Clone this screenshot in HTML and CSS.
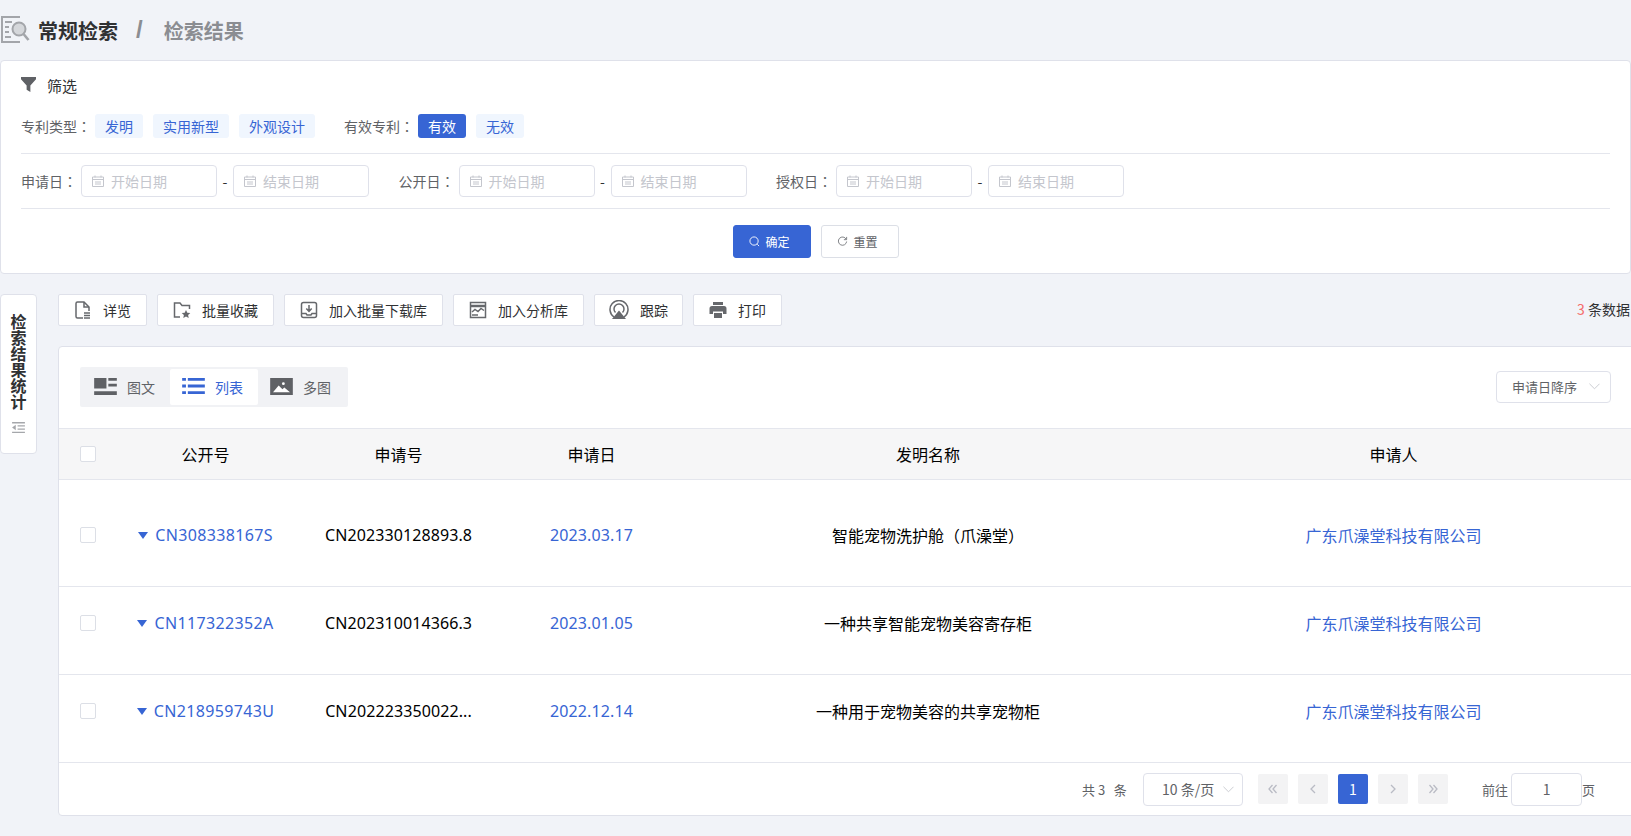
FILE: index.html
```html
<!DOCTYPE html>
<html lang="zh-CN">
<head>
  <meta charset="UTF-8">
  <title>检索结果</title>
  <link rel="stylesheet" href="styles.css">
</head>
<body>
  <!-- 面包屑 -->
  <div class="crumb">
    <svg class="crumb-icon" viewBox="0 0 30 30" fill="none" stroke="#a3a5aa" stroke-width="2">
      <path d="M20 2H2v25h18"/>
      <path d="M5 7h7M5 12h4M5 17h4M5 22h6"/>
      <circle cx="19" cy="14" r="6.5" fill="#d5d7db"/>
      <path d="M23.5 19l5 6" stroke-width="2.6"/>
    </svg>
    <span class="crumb-main">常规检索</span>
    <span class="crumb-sep">/</span>
    <span class="crumb-sub">检索结果</span>
  </div>

  <!-- 筛选 -->
  <div class="filter-panel">
    <div class="filter-title">
      <svg class="filter-icon" viewBox="0 0 16 16"><path d="M0 0h16v2.5L10 9v7l-4-2.500V9L0 2.500z" fill="#5f6165"/></svg>
      <span>筛选</span>
    </div>
    <div class="filter-tags">
      <span class="label">专利类型<i class="colon" lang="zh-TW">：</i></span>
      <span class="tag">发明</span>
      <span class="tag">实用新型</span>
      <span class="tag">外观设计</span>
      <span class="label label-gap">有效专利<i class="colon" lang="zh-TW">：</i></span>
      <span class="tag tag-active">有效</span>
      <span class="tag">无效</span>
    </div>
    <div class="filter-dates">
      <span class="label">申请日<i class="colon" lang="zh-TW">：</i></span>
      <div class="date-input"><svg class="cal" viewBox="0 0 12 12"><path d="M.5 2h11v9.500H.5zM.5 4.500h11M3 .5v2M9 .5v2M3 7h6M3 9h6" fill="none" stroke="#c4c6cd"/></svg>开始日期</div>
      <span class="dash">-</span>
      <div class="date-input"><svg class="cal" viewBox="0 0 12 12"><path d="M.5 2h11v9.500H.5zM.5 4.500h11M3 .5v2M9 .5v2M3 7h6M3 9h6" fill="none" stroke="#c4c6cd"/></svg>结束日期</div>
      <span class="label date-label">公开日<i class="colon" lang="zh-TW">：</i></span>
      <div class="date-input"><svg class="cal" viewBox="0 0 12 12"><path d="M.5 2h11v9.500H.5zM.5 4.500h11M3 .5v2M9 .5v2M3 7h6M3 9h6" fill="none" stroke="#c4c6cd"/></svg>开始日期</div>
      <span class="dash">-</span>
      <div class="date-input"><svg class="cal" viewBox="0 0 12 12"><path d="M.5 2h11v9.500H.5zM.5 4.500h11M3 .5v2M9 .5v2M3 7h6M3 9h6" fill="none" stroke="#c4c6cd"/></svg>结束日期</div>
      <span class="label date-label">授权日<i class="colon" lang="zh-TW">：</i></span>
      <div class="date-input"><svg class="cal" viewBox="0 0 12 12"><path d="M.5 2h11v9.500H.5zM.5 4.500h11M3 .5v2M9 .5v2M3 7h6M3 9h6" fill="none" stroke="#c4c6cd"/></svg>开始日期</div>
      <span class="dash">-</span>
      <div class="date-input"><svg class="cal" viewBox="0 0 12 12"><path d="M.5 2h11v9.500H.5zM.5 4.500h11M3 .5v2M9 .5v2M3 7h6M3 9h6" fill="none" stroke="#c4c6cd"/></svg>结束日期</div>
    </div>
    <div class="filter-actions">
      <button class="btn btn-primary">
        <svg class="btn-icon" viewBox="0 0 12 12" fill="none" stroke="#fff"><circle cx="5.500" cy="5.500" r="4.500"/><path d="M9 9l2 2"/></svg>确定
      </button>
      <button class="btn">
        <svg class="btn-icon" viewBox="0 0 12 12" fill="none" stroke="#77797e"><path d="M10 3.500A4.500 4.500 0 1 0 10.500 6M10.500 1v3h-3"/></svg>重置
      </button>
    </div>
  </div>

  <div class="content">
    <!-- 左侧统计 -->
    <div class="side-tab">
      <span class="side-text">检索结果统计</span>
      <svg class="side-icon" viewBox="0 0 14 12" fill="#a5a7ab"><path d="M0 0h14v1.500H0zM6 3.500h8V5H6zM6 7h8v1.500H6zM0 10.500h14V12H0zM4 3v6L0 6z"/></svg>
    </div>

    <div class="main">
      <div class="toolbar">
        <button class="tool tool-1">
          <svg class="tool-icon" viewBox="0 0 18 18" fill="none" stroke="#66686c" stroke-width="1.500"><path d="M9 17H3.500A1.500 1.500 0 0 1 2 15.500v-13A1.500 1.500 0 0 1 3.500 1H10l5 5v4"/><path d="M10 1v5h5"/><path d="M10 12h6M10 14.500h6M10 17h6"/></svg>详览
        </button>
        <button class="tool tool-2">
          <svg class="tool-icon" viewBox="0 0 18 18" fill="none" stroke="#66686c" stroke-width="1.500"><path d="M7 16H1.500V2H7l2 2.500h7.500V8"/><path d="M13 9l1.300 2.700 3 .4-2.200 2 .6 2.900-2.700-1.500-2.700 1.500.6-2.900-2.200-2 3-.4z" fill="#66686c" stroke="none"/></svg>批量收藏
        </button>
        <button class="tool tool-3">
          <svg class="tool-icon" viewBox="0 0 18 18" fill="none" stroke="#66686c" stroke-width="1.500"><rect x="1.500" y="1.500" width="15" height="15" rx="2"/><path d="M9 4v6M6.300 7.500L9 10.500l2.700-3M1.500 12.500h4.500l1 1.500h4l1-1.500h4.500"/></svg>加入批量下载库
        </button>
        <button class="tool tool-4">
          <svg class="tool-icon" viewBox="0 0 18 18" fill="none" stroke="#66686c" stroke-width="1.500"><path d="M1.500 1.500h15v15h-15z"/><path d="M1.500 5h15" stroke-width="2.500"/><path d="M3 11l3-2.500 3 2 3-3 3 2M3 14h6"/></svg>加入分析库
        </button>
        <button class="tool tool-5">
          <svg class="tool-icon tool-icon-lg" viewBox="0 0 20 20" fill="none" stroke="#66686c" stroke-width="1.500"><path d="M5 17a9 9 0 1 1 10 0"/><path d="M6.500 12.500a5 5 0 1 1 7 0"/><path d="M10 10.500l7 8.500H3z" fill="#66686c" stroke="none"/></svg>跟踪
        </button>
        <button class="tool tool-6">
          <svg class="tool-icon" viewBox="0 0 18 18" fill="#66686c"><path d="M4 1h10v3H4zM3 5h12a2.500 2.500 0 0 1 2.500 2.500V13H14v-2.500H4V13H.5V7.500A2.500 2.500 0 0 1 3 5zM5 12h8v5H5z"/></svg>打印
        </button>
        <div class="count"><em>3</em> 条数据</div>
      </div>

      <div class="result-panel">
        <div class="result-head">
          <div class="view-tabs">
            <div class="view-tab">
              <svg class="view-icon" viewBox="0 0 24 18" fill="#5f6165"><path d="M0 0h13v11H0zM15 0h9v3h-9zM15 6h9v3h-9zM0 14h24v4H0z"/></svg>图文
            </div>
            <div class="view-tab view-tab-active">
              <svg class="view-icon" viewBox="0 0 24 18" fill="#3765d4"><path d="M0 0h4v3H0zM6 0h18v3H6zM0 7h4v3H0zM6 7h18v3H6zM0 14h4v3H0zM6 14h18v3H6z"/></svg>列表
            </div>
            <div class="view-tab">
              <svg class="view-icon" viewBox="0 0 24 18"><path d="M0 0h24v18H0z" fill="#5f6165"/><path d="M3 15l6-7 4 4 2-2 6 5z" fill="#fff"/><circle cx="14" cy="6" r="1.500" fill="#fff"/></svg>多图
            </div>
          </div>
          <div class="sort-select">申请日降序
            <svg class="chev" viewBox="0 0 12 7" fill="none" stroke="#c6c8ce"><path d="M.5.5L6 6 11.500.5"/></svg>
          </div>
        </div>

        <table class="result-table">
          <colgroup>
            <col class="col-check"><col class="col-no"><col class="col-no"><col class="col-no"><col class="col-name"><col class="col-app"><col>
          </colgroup>
          <thead>
            <tr>
              <th class="cell-check"><span class="checkbox"></span></th>
              <th>公开号</th><th>申请号</th><th>申请日</th><th>发明名称</th><th>申请人</th><th></th>
            </tr>
          </thead>
          <tbody>
            <tr class="row-first">
              <td class="cell-check"><span class="checkbox"></span></td>
              <td class="num pub-no"><span class="caret"></span><a>CN308338167S</a></td>
              <td class="num">CN202330128893.8</td>
              <td class="num"><a>2023.03.17</a></td>
              <td>智能宠物洗护舱（爪澡堂）</td>
              <td><a>广东爪澡堂科技有限公司</a></td>
              <td></td>
            </tr>
            <tr>
              <td class="cell-check"><span class="checkbox"></span></td>
              <td class="num pub-no"><span class="caret"></span><a>CN117322352A</a></td>
              <td class="num">CN202310014366.3</td>
              <td class="num"><a>2023.01.05</a></td>
              <td>一种共享智能宠物美容寄存柜</td>
              <td><a>广东爪澡堂科技有限公司</a></td>
              <td></td>
            </tr>
            <tr>
              <td class="cell-check"><span class="checkbox"></span></td>
              <td class="num pub-no"><span class="caret"></span><a>CN218959743U</a></td>
              <td class="num">CN202223350022...</td>
              <td class="num"><a>2022.12.14</a></td>
              <td>一种用于宠物美容的共享宠物柜</td>
              <td><a>广东爪澡堂科技有限公司</a></td>
              <td></td>
            </tr>
          </tbody>
        </table>

        <div class="pager">
          <span class="pager-total">共 3 &nbsp;&nbsp;条</span>
          <div class="pager-size">10 条/页
            <svg class="chev" viewBox="0 0 12 7" fill="none" stroke="#c6c8ce"><path d="M.5.5L6 6 11.500.5"/></svg>
          </div>
          <div class="pager-btns">
            <span class="page-btn"><svg viewBox="0 0 10 10" fill="none" stroke="#b9bbc4" stroke-width="1.300"><path d="M4.500 1L1 5l3.500 4M8.500 1L5 5l3.500 4"/></svg></span>
            <span class="page-btn"><svg viewBox="0 0 10 10" fill="none" stroke="#b9bbc4" stroke-width="1.300"><path d="M7 1L3 5l4 4"/></svg></span>
            <span class="page-btn page-current">1</span>
            <span class="page-btn"><svg viewBox="0 0 10 10" fill="none" stroke="#b9bbc4" stroke-width="1.300"><path d="M3 1l4 4-4 4"/></svg></span>
            <span class="page-btn"><svg viewBox="0 0 10 10" fill="none" stroke="#b9bbc4" stroke-width="1.300"><path d="M1.500 1L5 5 1.500 9M5.500 1L9 5 5.500 9"/></svg></span>
          </div>
          <span class="pager-goto">前往</span>
          <div class="pager-input">1</div>
          <span>页</span>
        </div>
      </div>
    </div>
  </div>
</body>
</html>
```

FILE: styles.css
```css
/* 通用 */
html, body {
  height: 836px;
  overflow: hidden;
}
body {
  margin: 0;
  background: #f1f3f8;
  font-family: "Noto Sans CJK SC", "Noto Sans", sans-serif;
  font-size: 14px;
  color: #303133;
}
a {
  color: #3765d4;
}
button {
  font-family: inherit;
}

/* 面包屑 */
.crumb {
  height: 60px;
  display: flex;
  align-items: center;
  font-size: 20px;
  font-weight: 700;
}
.crumb-icon {
  width: 30px;
  height: 30px;
  margin-right: 8px;
}
.crumb-main {
  color: #303133;
}
.crumb-sep {
  margin: 0 21px 0 18px;
  font-family: "Liberation Sans", sans-serif;
  font-size: 24px;
  color: #8b8d92;
}
.crumb-sub {
  color: #8b8d92;
}

/* 筛选 */
.filter-panel {
  height: 214px;
  box-sizing: border-box;
  padding: 0 20px;
  background: #fff;
  border: 1px solid #dfe1ea;
  border-radius: 4px;
}
.filter-title {
  height: 50px;
  box-sizing: border-box;
  padding-bottom: 2px;
  display: flex;
  align-items: center;
  font-size: 15px;
}
.filter-icon {
  width: 15px;
  height: 15px;
  margin-right: 11px;
  margin-top: -2px;
}
.filter-tags {
  height: 39px;
  display: flex;
  align-items: flex-start;
  padding-top: 3px;
  border-bottom: 1px solid #e4e6ed;
}
.label {
  color: #606266;
  line-height: 24px;
}
.colon {
  font-style: normal;
  font-family: "Noto Sans CJK TC", sans-serif;
}
.label-gap {
  margin-left: 29px;
}
.tag {
  height: 24px;
  line-height: 24px;
  padding: 0 10px;
  margin-left: 10px;
  border-radius: 3px;
  background: #f0f6fe;
  color: #3765d4;
}
.label + .tag {
  margin-left: 4px;
}
.tag-active {
  background: #3765d4;
  color: #fff;
}
.filter-dates {
  height: 55px;
  box-sizing: border-box;
  display: flex;
  align-items: center;
  border-bottom: 1px solid #e4e6ed;
}
.date-input {
  width: 136px;
  height: 32px;
  box-sizing: border-box;
  display: flex;
  align-items: center;
  padding-left: 10px;
  margin-left: 4px;
  border: 1px solid #dfe1ea;
  border-radius: 4px;
  color: #c4c6cd;
  font-size: 14px;
}
.date-input .cal {
  width: 12px;
  height: 12px;
  margin-right: 7px;
  flex: none;
}
.dash {
  width: 16px;
  text-align: center;
  color: #303133;
}
.dash + .date-input {
  margin-left: 0;
}
.date-label {
  margin-left: 29.5px;
}
.filter-actions {
  display: flex;
  justify-content: center;
  gap: 10px;
  padding-top: 16px;
}
.btn {
  width: 78px;
  height: 33px;
  display: flex;
  align-items: center;
  justify-content: center;
  background: #fff;
  border: 1px solid #dcdfe6;
  border-radius: 3px;
  font-size: 12px;
  color: #606266;
  padding: 0 4px 0 0;
}
.btn-primary {
  background: #3765d4;
  border-color: #3765d4;
  color: #fff;
}
.btn-icon {
  width: 11px;
  height: 11px;
  margin-right: 5px;
}

/* 内容区 */
.content {
  display: flex;
  margin-top: 20px;
}
.side-tab {
  flex: none;
  width: 37px;
  height: 160px;
  box-sizing: border-box;
  padding-top: 19px;
  display: flex;
  flex-direction: column;
  align-items: center;
  background: #fff;
  border: 1px solid #dfe1ea;
  border-radius: 4px;
}
.side-text {
  writing-mode: vertical-rl;
  font-size: 16px;
  font-weight: 700;
  line-height: 16px;
}
.side-icon {
  width: 13px;
  height: 11px;
  margin-top: 12px;
}
.main {
  flex: none;
  width: 1590px;
  margin-left: 21px;
}

/* 工具栏 */
.toolbar {
  height: 32px;
  display: flex;
  gap: 10px;
}
.tool {
  height: 32px;
  box-sizing: border-box;
  display: flex;
  align-items: center;
  justify-content: center;
  padding: 0;
  background: #fff;
  border: 1px solid #dfe1ea;
  border-radius: 2px;
  font-size: 14px;
  color: #303133;
}
.tool-1 { width: 89px; }
.tool-2 { width: 117px; }
.tool-3 { width: 159px; }
.tool-4 { width: 131px; }
.tool-5 { width: 89px; }
.tool-6 { width: 89px; }
.tool-icon {
  width: 18px;
  height: 18px;
  margin-right: 11px;
}
.tool-icon-lg {
  width: 20px;
  height: 20px;
}
.count {
  margin-left: auto;
  margin-right: 14px;
  width: 57px;
  white-space: nowrap;
  line-height: 31px;
  font-size: 14px;
  color: #303133;
}
.count em {
  font-style: normal;
  color: #f56c6c;
}

/* 结果面板 */
.result-panel {
  height: 470px;
  margin-top: 20px;
  box-sizing: border-box;
  background: #fff;
  border: 1px solid #dfe1ea;
  border-radius: 4px;
}
.result-head {
  height: 81px;
  box-sizing: border-box;
  display: flex;
  align-items: center;
  justify-content: space-between;
  padding: 0 19px 2px 21px;
}
.view-tabs {
  display: flex;
  height: 40px;
  box-sizing: border-box;
  padding: 2px;
  background: #f1f2f5;
  border-radius: 2px;
}
.view-tab {
  width: 88px;
  box-sizing: border-box;
  padding-right: 3px;
  display: flex;
  align-items: center;
  justify-content: center;
  color: #606266;
  border-radius: 2px;
}
.view-tab-active {
  background: #fff;
  color: #3765d4;
}
.view-icon {
  width: 23px;
  height: 17px;
  margin-right: 10px;
}
.sort-select {
  width: 115px;
  height: 32px;
  box-sizing: border-box;
  display: flex;
  align-items: center;
  justify-content: space-between;
  padding: 0 10px 0 15px;
  margin-right: 17px;
  border: 1px solid #dfe1ea;
  border-radius: 4px;
  font-size: 13px;
  color: #606266;
}
.chev {
  width: 11px;
  height: 7px;
}

/* 表格 */
.result-table {
  width: 1588px;
  table-layout: fixed;
  border-collapse: collapse;
  font-size: 16px;
  color: #000;
}
.col-check { width: 50px; }
.col-no { width: 193px; }
.col-name { width: 480px; }
.col-app { width: 451px; }
.result-table thead tr {
  height: 51px;
  background: #f6f6f7;
  border-top: 1px solid #e4e6ed;
  border-bottom: 1px solid #e4e6ed;
}
.result-table th {
  font-weight: 400;
  padding: 0;
}
.result-table td {
  height: 88px;
  box-sizing: border-box;
  padding-bottom: 16px;
  padding-top: 0;
  padding-left: 0;
  padding-right: 0;
  text-align: center;
  border-bottom: 1px solid #e4e6ed;
  white-space: nowrap;
}
.result-table .row-first td {
  height: 107px;
  padding-top: 4px;
  padding-bottom: 0;
}
.result-table .cell-check {
  padding-left: 21px;
  text-align: left;
}
.num {
  font-family: "Noto Sans", "Noto Sans CJK SC", sans-serif;
  letter-spacing: .1px;
}
.pub-no {
  letter-spacing: .35px;
}
.checkbox {
  display: block;
  width: 14px;
  height: 14px;
  background: #fff;
  border: 1px solid #dcdfe6;
  border-radius: 2px;
}
.caret {
  display: inline-block;
  width: 0;
  height: 0;
  margin-right: 7px;
  vertical-align: 2px;
  border-left: 5.500px solid transparent;
  border-right: 5.500px solid transparent;
  border-top: 7px solid #3765d4;
}

/* 分页 */
.pager {
  height: 52px;
  display: flex;
  align-items: center;
  padding-left: 1023px;
  font-size: 13px;
  color: #606266;
}
.pager-total {
  width: 61px;
}
.pager-size {
  width: 100px;
  height: 33px;
  box-sizing: border-box;
  display: flex;
  align-items: center;
  justify-content: space-between;
  padding: 0 8px 0 18px;
  border: 1px solid #dfe1ea;
  border-radius: 4px;
  font-size: 14px;
}
.pager-btns {
  display: flex;
  gap: 10px;
  margin-left: 15px;
}
.page-btn {
  width: 30px;
  height: 30px;
  display: flex;
  align-items: center;
  justify-content: center;
  background: #f3f3f4;
  border-radius: 2px;
  font-size: 14px;
}
.page-btn svg {
  width: 10px;
  height: 10px;
}
.page-current {
  background: #3765d4;
  color: #fff;
}
.pager-goto {
  margin-left: 34px;
  margin-right: 3px;
}
.pager-input {
  width: 71px;
  height: 33px;
  box-sizing: border-box;
  display: flex;
  align-items: center;
  justify-content: center;
  border: 1px solid #dfe1ea;
  border-radius: 4px;
  font-size: 14px;
}
```
